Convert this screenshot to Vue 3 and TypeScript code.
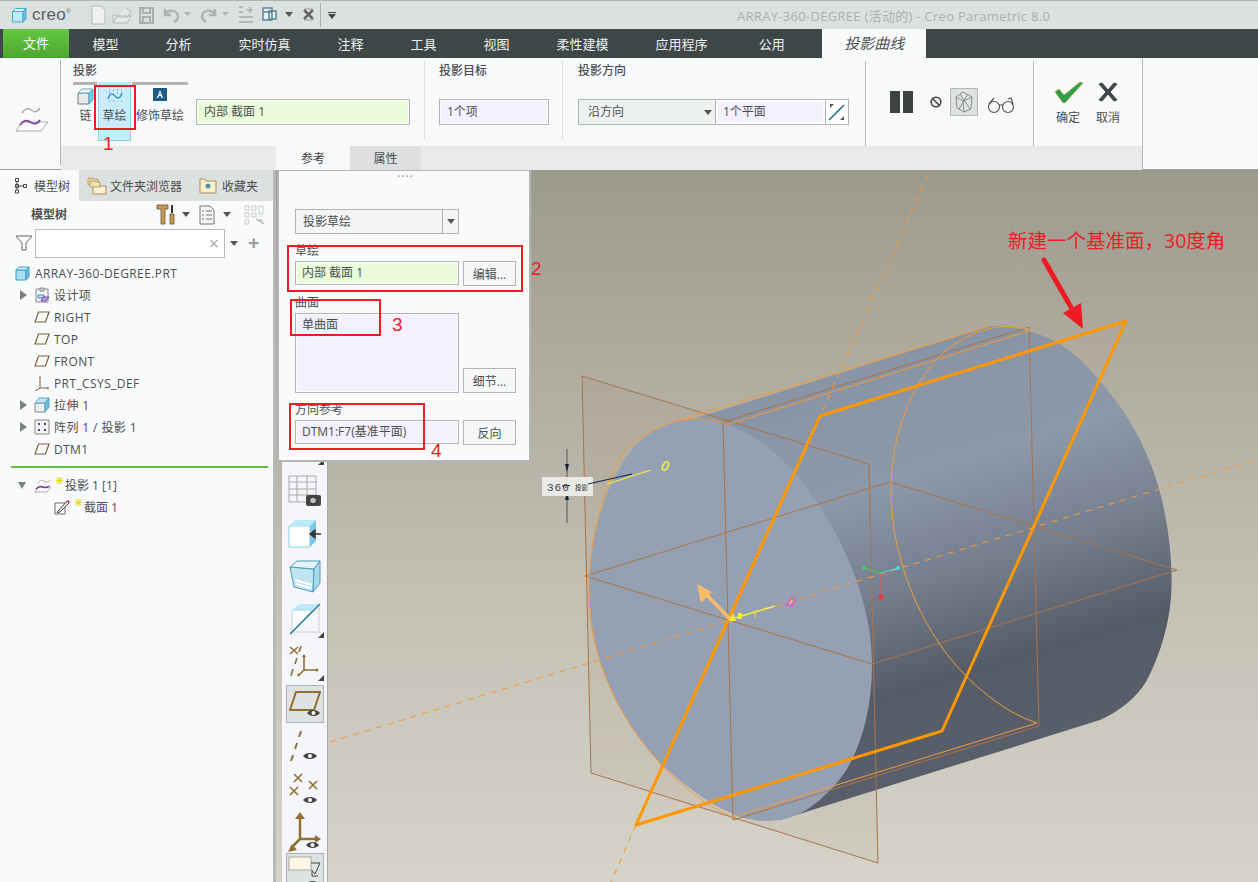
<script setup lang="ts">
// Creo Parametric: 投影曲线 ribbon, model tree, dialog and the 3D view
interface TreeRow {
  label: string
  kind: 'part' | 'design' | 'plane' | 'csys' | 'extrude' | 'pattern'
  arrow?: boolean
}

const menuTabs = [
  { label: '模型', cls: '' },
  { label: '分析', cls: '' },
  { label: '实时仿真', cls: '' },
  { label: '注释', cls: '' },
  { label: '工具', cls: '' },
  { label: '视图', cls: '' },
  { label: '柔性建模', cls: '' },
  { label: '应用程序', cls: '' },
  { label: '公用', cls: 'tab-last' },
]

const treeRows: TreeRow[] = [
  { label: '设计项', kind: 'design', arrow: true },
  { label: 'RIGHT', kind: 'plane' },
  { label: 'TOP', kind: 'plane' },
  { label: 'FRONT', kind: 'plane' },
  { label: 'PRT_CSYS_DEF', kind: 'csys' },
  { label: '拉伸 1', kind: 'extrude', arrow: true },
  { label: '阵列 1 / 投影 1', kind: 'pattern', arrow: true },
  { label: 'DTM1', kind: 'plane' },
]
</script>

<template>
  <div class="app">
    <header class="titlebar">
      <svg class="t-cube" width="16" height="16" viewBox="0 0 16 16">
        <path d="M1.5 4.5h10.5v10.500h-10.500z" fill="#bfe9f8" stroke="#4aa7cb" />
        <path d="M1.500 4.500l3-3h10.500l-3 3z" fill="#e3f6fd" stroke="#4aa7cb" />
        <path d="M12 4.500l3-3v10.500l-3 3z" fill="#6cc0de" stroke="#4aa7cb" />
      </svg>
      <span class="logo">creo<sup>®</sup></span>
      <svg class="quick" width="250" height="22" viewBox="0 0 250 22" fill="none" stroke="#b4b9b9">
        <path d="M1 2h9l4 4v14h-13z" fill="#eff1f1" />
        <path d="M22 19v-8h4l2 2h9l3-6-5-3M22 19h14l4-7h-14l-4 7" fill="#e6e9e9" />
        <path d="M49 4h13v15h-13zM52 4v5h7v-5M52 19v-6h7v6" stroke-width="2" stroke="#a9aeae" />
        <path d="M74 10c4-5 12-4 13 2 0 3-2 5-4 6M74 5v6h6" stroke-width="2.500" stroke="#aeb3b3" />
        <path d="M93 8h7l-3.500 4z" fill="#aeb3b3" stroke="none" />
        <path d="M124 10c-4-5-12-4-13 2 0 3 2 5 4 6M124 5v6h-6" stroke-width="2.500" stroke="#aeb3b3" />
        <path d="M131 8h7l-3.500 4z" fill="#aeb3b3" stroke="none" />
        <path d="M148 3h4M148 8h4M148 13h14M148 18h14M156 6h6M159 3v6" stroke-width="2" />
        <path d="M172 4h9v4h-9zM172 8h9v8h-9zM178 7h7v8h-7z" fill="#e7f2f6" stroke="#5d8494" stroke-width="1.500" />
        <path d="M194 8h8l-4 5z" fill="#555" stroke="none" />
        <path d="M213 6l9 9M222 6l-9 9" stroke="#666" stroke-width="2.500" />
        <path d="M213 5h9M213 16h9" stroke="#999" />
      </svg>
      <i class="t-sep" />
      <svg class="t-drop" width="10" height="10" viewBox="0 0 10 10"><path d="M1 2h8v1h-8zM1 4h8l-4 5z" fill="#444" /></svg>
      <span class="wintitle">ARRAY-360-DEGREE (活动的) - Creo Parametric 8.0</span>
    </header>

    <nav class="menubar">
      <span class="file-tab">文件</span>
      <span v-for="t in menuTabs" :key="t.label" class="menu-tab" :class="t.cls">{{ t.label }}</span>
      <span class="active-tab">投影曲线</span>
    </nav>

    <section class="ribbon">
      <div class="rb-lead">
        <svg width="34" height="30" viewBox="0 0 34 30" fill="none">
          <path d="M7 9c3-5 6-5 9-3s6 3 9-2" stroke="#a9a9a9" stroke-width="1.500" />
          <path d="M1 27l6-9h26l-7 9z" fill="#fff" stroke="#aaa" />
          <path d="M5 21c3-5 7-5 10-3s7 3 10-2" stroke="#7a4aa6" stroke-width="1.800" />
        </svg>
      </div>
      <div class="rb-main">
        <div class="rb-groups">
          <div class="group g-proj">
            <div class="g-title">投影</div>
            <div class="g-bars"><i class="b1" /><i class="b2" /><i class="b3" /></div>
            <div class="g-row">
              <div class="rb-btn b-chain">
                <svg width="17" height="17" viewBox="0 0 17 17">
                  <path d="M1 5h11v11h-11z" fill="#e8e9e9" stroke="#777" />
                  <path d="M1 5l4-4h11l-4 4z" fill="#f8f8f8" stroke="#5aa8c8" />
                  <path d="M12 5l4-4v11l-4 4z" fill="#7fc6df" stroke="#5aa8c8" />
                </svg>
                <span>链</span>
              </div>
              <div class="rb-btn b-sketch">
                <svg width="16" height="14" viewBox="0 0 16 14" fill="none">
                  <path d="M2 1h.8M6 1h.8M10 1h.8M14 1h.8M2 4h.8M10 4h.800M14 4h.8M2 12h.8M6 12h.8M14 12h.8" stroke="#666" />
                  <path d="M1 10c2-6 4-6 7-3s5 3 7-3" stroke="#2d9fc4" stroke-width="1.500" />
                </svg>
                <span>草绘</span>
              </div>
              <div class="rb-btn b-cosm">
                <svg width="14" height="13" viewBox="0 0 14 13"><rect width="14" height="13" fill="#1c5b82" /><path d="M7 2l3 8h-1.500l-.6-2h-2l-.6 2h-1.500zM6.300 6.700h1.400l-.7-2.200z" fill="#fff" /></svg>
                <span>修饰草绘</span>
              </div>
              <div class="field f-green f-sk">内部 截面 1</div>
            </div>
          </div>
          <div class="group g-target">
            <div class="g-title">投影目标</div>
            <div class="field f-violet f-target">1个项</div>
          </div>
          <div class="group g-dir">
            <div class="g-title">投影方向</div>
            <div class="dir-row">
              <div class="dir-sel">沿方向<i class="caret" /></div>
              <div class="dir-val"><span>1个平面</span></div>
              <div class="dir-flip">
                <svg width="18" height="18" viewBox="0 0 18 18" fill="none">
                  <path d="M1 17l15-15" stroke="#1d6e96" stroke-width="1.600" />
                  <path d="M2 1h4l-4 4zM16 17h-4l4-4z" fill="#555" />
                </svg>
              </div>
            </div>
          </div>
          <div class="group g-ctrl">
            <div class="pause"><i /><i /></div>
            <svg class="stop" width="12" height="12" viewBox="0 0 12 12" fill="none" stroke="#444" stroke-width="1.600"><circle cx="6" cy="6" r="4.800" /><path d="M2.500 2.500l7 7" /></svg>
            <div class="preview">
              <svg width="20" height="22" viewBox="0 0 20 22" fill="none" stroke="#777" stroke-width=".8"><path d="M2 6l7-5 9 5-1 12-7 3-7-4zM2 6l7 4 9-4M9 10l1 11M6 3l10 15M14 3l-9 15" /></svg>
            </div>
            <svg class="glasses" width="28" height="18" viewBox="0 0 28 18" fill="none" stroke="#555" stroke-width="1.200"><circle cx="7" cy="11" r="5.500" /><circle cx="21" cy="11" r="5.500" /><path d="M12 9h4M2 8l5-6M26 8l-2-6-3 1" /></svg>
          </div>
          <div class="group g-ok">
            <div class="ok-btn">
              <svg width="29" height="22" viewBox="0 0 29 22"><path d="M1 11l4-3 5 6L26 1l3 1-18 20h-2z" fill="#2f9e4f" stroke="#b9b23b" stroke-width=".8" /></svg>
              <span>确定</span>
            </div>
            <div class="ok-btn">
              <svg width="20" height="22" viewBox="0 0 20 22"><path d="M1 3l3-1 6 7 6-7 3 1-7 8 7 8-3 1-6-7-6 7-3-1 7-8z" fill="#3f4446" stroke="#3f4446" /></svg>
              <span>取消</span>
            </div>
          </div>
        </div>
        <div class="rb-tabs">
          <span class="sub-tab on">参考</span>
          <span class="sub-tab">属性</span>
        </div>
      </div>
      <div class="rb-rest" />
    </section>

    <main class="work">
      <aside class="side">
        <div class="side-tabs">
          <div class="s-tab on">
            <svg width="14" height="17" viewBox="0 0 14 17" fill="none" stroke="#444"><path d="M1.500 1.500h3v3h-3zM1.500 7.500h3v3h-3zM1.500 13h3v3h-3zM9.500 7.500h3v3h-3zM3 4.500v8.500M4.500 9h5" /></svg>
            模型树
          </div>
          <div class="s-tab t2">
            <svg width="20" height="19" viewBox="0 0 20 19"><path d="M1 2h5l1 1h4v6h-10z" fill="#e8d8a8" stroke="#b5a06c" /><path d="M6 9h5l1 1h7v8h-13z" fill="#fbf1d4" stroke="#a38f5f" /><path d="M3 5h5l1 1h4v5h-10z" fill="#f0e2b8" stroke="#b5a06c" /></svg>
            文件夹浏览器
          </div>
          <div class="s-tab t3">
            <svg width="18" height="16" viewBox="0 0 18 16"><path d="M1 3V1h5l1 2h10v12h-16z" fill="#fbeecb" stroke="#a3905f" /><path d="M9 5.500v5M6.500 8h5M7 6l4 4M11 6l-4 4" stroke="#1d6e96" /></svg>
            收藏夹
          </div>
        </div>
        <div class="side-body">
          <div class="tree-head">
            <b>模型树</b>
            <svg class="h-tools" width="20" height="21" viewBox="0 0 20 21">
              <path d="M1 1h11v4h-3v15h-4v-15h-4z" fill="#c69a55" stroke="#6b5330" stroke-width=".8" />
              <path d="M15 1h2v8h-2z" fill="#333" /><path d="M14 10h4v10h-4z" fill="#c69a55" stroke="#6b5330" stroke-width=".8" />
            </svg>
            <i class="caret c1" />
            <svg class="h-list" width="16" height="20" viewBox="0 0 16 20" fill="none" stroke="#777"><path d="M1 1h10l4 4v14h-14z" fill="#f1f3f4" /><path d="M3 6h2M7 6h6M3 10h2M7 10h6M3 14h2M7 14h6" /></svg>
            <i class="caret c2" />
            <svg class="h-hide" width="21" height="20" viewBox="0 0 21 20" fill="none" stroke="#c8cbcb"><path d="M1 1h4v4h-4zM8 1h4v4h-4zM15 1h4v8h-4zM1 8h4v4h-4zM8 8h4v4h-4zM1 15h4v4h-4z" /><path d="M12 14l8 5M14 16c2-2 4-1 5 1" stroke="#9a9d9d" /></svg>
          </div>
          <div class="search">
            <svg width="18" height="16" viewBox="0 0 18 16" fill="none" stroke="#666"><path d="M1 1h16l-6 7v7h-4v-7z" fill="#fff" /></svg>
            <div class="search-box"><span>×</span></div>
            <i class="caret c3" />
            <span class="plus">+</span>
          </div>
          <div class="root-row">
            <svg width="15" height="15" viewBox="0 0 15 15"><path d="M1 4h10v10h-10z" fill="#a9def3" stroke="#3f9fc5" /><path d="M1 4l3-3h10l-3 3z" fill="#d2effa" stroke="#3f9fc5" /><path d="M11 4l3-3v10l-3 3z" fill="#69bede" stroke="#3f9fc5" /></svg>
            ARRAY-360-DEGREE.PRT
          </div>
          <div v-for="r in treeRows" :key="r.label" class="tree-row">
            <i class="arrow" :class="{ off: !r.arrow }" />
            <svg class="ticon" width="16" height="16" viewBox="0 0 16 16" fill="none">
              <template v-if="r.kind === 'plane'"><path d="M1 13L4.500 3H15L11.500 13z" stroke="#7a6232" stroke-width="1.200" /></template>
              <template v-else-if="r.kind === 'csys'"><path d="M6 2v11H15M6 13L1 16" stroke="#7a6232" /><path d="M6 1l-1 2h2zM15 13l-2-1v2z" fill="#7a6232" /></template>
              <template v-else-if="r.kind === 'design'">
                <path d="M2 2h12v13h-12z" fill="#f2f3f4" stroke="#888" /><path d="M6 1h4v3h-4z" fill="#ddd" stroke="#888" />
                <path d="M4 8h6v3h-6z" fill="#bcdcec" stroke="#4d8eae" /><path d="M7 14l2-4h6l-3 4z" fill="#b59cdc" stroke="#7a4aa6" />
              </template>
              <template v-else-if="r.kind === 'extrude'">
                <path d="M1 6h10v9h-10z" fill="#eceded" stroke="#888" /><path d="M1 6l4-5h10l-4 5z" fill="#c4e4f1" stroke="#5aa8c8" /><path d="M11 6l4-5v9l-4 5z" fill="#6fbcd9" stroke="#5aa8c8" />
              </template>
              <template v-else>
                <path d="M1 1h14v14h-14z" fill="#f4f5f6" stroke="#888" />
                <path d="M4 4h2v2h-2zM10 4h2v2h-2zM4 10h2v2h-2zM10 10h2v2h-2z" fill="#4a4490" />
              </template>
            </svg>
            <span>{{ r.label }}</span>
          </div>
          <div class="green-line" />
          <div class="new-row">
            <i class="arrow down" />
            <svg width="17" height="15" viewBox="0 0 17 15" fill="none"><path d="M4 5c2-3 4-3 6-2s4 2 6-1" stroke="#aaa" /><path d="M1 14l3-5h13l-4 5z" stroke="#aaa" fill="#fff" /><path d="M2 11c3-3 5-3 7-2s4 1 6-1" stroke="#7a2ea6" stroke-width="1.400" /></svg>
            <em>⋇</em><span>投影 1 [1]</span>
          </div>
          <div class="new-row sub">
            <svg width="16" height="16" viewBox="0 0 16 16" fill="none"><path d="M1 4h10v11h-10z" fill="#fff" stroke="#666" /><path d="M4 12l9-10 2 2-9 9-3 1z" fill="#ddd" stroke="#555" /><path d="M13 2l1-1 2 2-1 1z" fill="#c33" /></svg>
            <em>⋇</em><span>截面 1</span>
          </div>
        </div>
      </aside>

      <div class="view">
        <svg class="scene" viewBox="276 170 982 712" width="982" height="712">
          <defs>
            <linearGradient id="bodyGrad" gradientUnits="userSpaceOnUse" x1="930" y1="340" x2="1050" y2="740">
              <stop offset="0" stop-color="#8994a5" />
              <stop offset=".3" stop-color="#8d98a9" />
              <stop offset=".55" stop-color="#747e8d" />
              <stop offset=".78" stop-color="#565c67" />
              <stop offset="1" stop-color="#595f6a" />
            </linearGradient>
          </defs>
          <!-- translucent plane fills sit behind the part -->
          <path d="M582 376L869 464L878 863L591 773Z" fill="rgba(150,120,100,.09)" />
          <path d="M1126 321L820 416L636 825L942 731Z" fill="rgba(190,170,150,.08)" />

          <!-- cylinder -->
          <path d="M693 419L990 326C1020 326 1040 334 1053 340C1080 355 1098 378 1113 397C1140 432 1155 470 1162 500C1170 535 1173 570 1171 597C1169 625 1160 655 1147 680C1137 698 1118 712 1100 720L780 820Z" fill="url(#bodyGrad)" />
          <path d="M693 419C740 418 790 455 825 515C855 565 872 615 872 665C872 720 855 770 825 795C805 815 785 821 765 821C735 821 700 800 660 763C620 720 589 660 589 590C589 530 610 470 640 441C655 427 675 419 693 419Z" fill="#95a1b2" />

          <!-- planes -->
          <g fill="none" stroke="#a9734d" stroke-width="1">
            <path d="M582 376L869 464L878 863L591 773Z" />
            <path d="M723 422L1029 327L1039 726L733 820Z" />
            <path d="M585 576L890 482L1177 570L872 664Z" />
          </g>

          <!-- silhouette edges -->
          <g fill="none" stroke="#f39a3c" stroke-width="1">
            <path d="M680 420L990 326" />
            <path d="M726 425L1029 331" />
            <path d="M733 817L1037 723" />
            <path d="M726 423C715 420 705 418 693 419C675 419 655 427 627 447C610 470 589 530 589 590C589 660 620 720 660 763C685 790 710 808 733 817" />
            <path d="M1029 329C1000 322 975 330 950 347C915 375 891 430 891 490C891 570 930 640 965 675C990 700 1015 716 1037 723" />
          </g>

          <!-- dashed axes -->
          <g stroke="#f39a3c" stroke-width="1.100" stroke-dasharray="6 6" fill="none">
            <path d="M330 742L730 620" />
            <path d="M730 620L1258 459" />
            <path d="M928 175L820 416" />
            <path d="M636 825L611 882" />
          </g>

          <!-- DTM1 -->
          <path d="M1126 321L820 416L636 825L942 731Z" fill="none" stroke="#ff9800" stroke-width="3" stroke-linejoin="round" />

          <!-- dimension 360 -->
          <path d="M567 449V523" stroke="#555" />
          <path d="M567 472l-2-8h4zM567 492l-2 8h4z" fill="#12204a" />
          <rect x="542" y="477" width="51" height="19" fill="#e9e9e5" />
          <text x="547" y="491" class="dim">360</text>
          <text x="575" y="490" class="dim-s">投影</text>
          <path d="M562 486l8-.5M588 484L632 474" stroke="#12204a" fill="none" />
          <path d="M607 484L651 470" stroke="#f5ee3a" stroke-width="1.300" />
          <ellipse cx="665.500" cy="466" rx="2.500" ry="4.500" transform="rotate(30 665.500 466)" fill="none" stroke="#f5ee3a" stroke-width="1.600" />

          <!-- handles -->
          <path d="M732 621L704 592" stroke="#f8bd6c" stroke-width="3.500" />
          <path d="M697 584L712 592L701 603Z" fill="#f8bd6c" />
          <path d="M735 618L775 606" stroke="#f5ee3a" stroke-width="1.500" />
          <path d="M733 613l-4 8h7zM738 613h4v6h-4z" fill="#f5ee3a" />
          <path d="M755 610v8" stroke="#e0da3a" />
          <path d="M786 605l6-7 3 0-2 8z" fill="none" stroke="#e85ac0" stroke-width="1.400" />
          <path d="M790 604l2-4" stroke="#f5ee3a" />

          <!-- csys -->
          <path d="M881 573L864 568" stroke="#3fcf5a" />
          <path d="M881 573L898 568" stroke="#3fdfe6" />
          <path d="M881 573V597" stroke="#e05a5a" />
          <circle cx="864" cy="568" r="2" fill="#3fcf5a" />
          <circle cx="898" cy="568" r="2" fill="#3fdfe6" />
          <circle cx="881" cy="597" r="2.500" fill="#f0303a" />

          <!-- note arrow -->
          <path d="M1044 260L1076 316" stroke="#ed1c24" stroke-width="5" stroke-linecap="round" />
          <path d="M1083 329L1063 313L1081 303Z" fill="#ed1c24" />
        </svg>

        <div class="note">新建一个基准面，30度角</div>

        <div class="vtools">
          <div class="vt">
            <svg width="34" height="32" viewBox="0 0 34 32" fill="none">
              <path d="M1 1h27v26h-27zM1 7h27M1 14h27M1 20h27M9 1v26M19 1v26" stroke="#a8a8a8" />
              <rect x="18" y="20" width="15" height="11" rx="2" fill="#444" /><circle cx="25" cy="25.500" r="3.500" fill="#bbb" stroke="#222" />
            </svg>
          </div>
          <div class="vt">
            <svg width="34" height="30" viewBox="0 0 34 30" fill="none">
              <path d="M1 7h21v21h-21z" fill="#fff" stroke="#8fd0e8" /><path d="M1 7l6-6h21l-6 6z" fill="#bdeafa" /><path d="M22 7l6-6v21l-6 6z" fill="#7cc9e3" />
              <path d="M33 15h-9M22 15l5-4v8z" stroke="#333" fill="#333" stroke-width="1.300" />
            </svg>
          </div>
          <div class="vt">
            <svg width="32" height="33" viewBox="0 0 32 33" fill="none">
              <path d="M1 7l24 2-1 23-19-5z" fill="#bfe5f2" stroke="#4d9dbb" /><path d="M1 7L8 1h23l-6 8z" fill="#e3f3f8" stroke="#4d9dbb" /><path d="M25 9l6-8v22l-7 9z" fill="#a8d9ea" stroke="#4d9dbb" />
              <path d="M6 20l17 5M7 24l15 4" stroke="#fff" stroke-width="2" />
            </svg>
          </div>
          <div class="vt corner">
            <svg width="32" height="32" viewBox="0 0 32 32" fill="none">
              <path d="M3 7L10 1h20l-7 7z" fill="#bfe9f8" /><path d="M3 7h20L3 30z" fill="#fff" stroke="#a7dbee" /><path d="M30 3v26H3" stroke="#aaa" stroke-dasharray="1 1" /><path d="M1 31L31 1" stroke="#1d6e96" stroke-width="1.300" />
            </svg>
          </div>
          <div class="vt corner">
            <svg width="32" height="32" viewBox="0 0 32 32" fill="none" stroke="#8f6f36" stroke-width="1.600">
              <path d="M1 2l8 7M9 2l-8 7M12 1l-2 6M8 13l-2 6M4 24l-2 7" /><path d="M15 25V10M15 25h14M15 25l-6 6" /><path d="M15 9l-2 3h4zM30 25l-3-2v4zM8 31l3-1-2-2z" fill="#8f6f36" stroke="none" />
            </svg>
          </div>
          <div class="vt">
            <div class="sel">
              <svg width="32" height="28" viewBox="0 0 32 28" fill="none">
                <path d="M1 20L7 2h24l-6 18z" stroke="#8f6f36" stroke-width="2" />
                <path d="M18 23c3-4 10-4 13 0-3 4-10 4-13 0z" fill="#444" /><circle cx="24.500" cy="23" r="2" fill="#fff" />
              </svg>
            </div>
          </div>
          <div class="vt">
            <svg width="32" height="32" viewBox="0 0 32 32" fill="none">
              <path d="M12 1l-2 6M8 13l-2 6M4 25l-2 6" stroke="#8f6f36" stroke-width="2" />
              <path d="M14 26c3-4 11-4 14 0-3 4-11 4-14 0z" fill="#444" /><circle cx="21" cy="26" r="2" fill="#fff" />
            </svg>
          </div>
          <div class="vt">
            <svg width="32" height="32" viewBox="0 0 32 32" fill="none" stroke="#8f6f36" stroke-width="1.600">
              <path d="M5 1l8 8M13 1l-8 8M20 8l8 8M28 8l-8 8M1 14l8 8M9 14l-8 8" />
              <path d="M14 27c3-4 11-4 14 0-3 4-11 4-14 0z" fill="#444" stroke="none" /><circle cx="21" cy="27" r="2" fill="#fff" stroke="none" />
            </svg>
          </div>
          <div class="vt up">
            <svg width="34" height="40" viewBox="0 0 34 40" fill="none">
              <path d="M12 27V6M12 27h17M12 27l-9 9" stroke="#8f6f36" stroke-width="2.500" />
              <path d="M12 0l-5 7h10zM33 27l-6-4v8zM0 40l9-2-5-6z" fill="#8f6f36" />
              <path d="M18 33c3-4 10-4 13 0-3 4-10 4-13 0z" fill="#444" /><circle cx="24.500" cy="33" r="2" fill="#fff" />
            </svg>
          </div>
          <div class="vt top">
            <div class="sel last">
              <svg width="34" height="28" viewBox="0 0 34 28" fill="none">
                <rect x="1" y="1" width="22" height="13" fill="#fff6e3" stroke="#aaa" />
                <path d="M23 7h9l-5 11M27 18l-3-3M24 14v6h6" stroke="#444" />
                <path d="M18 28c3-4 10-4 13 0z" fill="#444" />
              </svg>
            </div>
          </div>
        </div>

        <div class="dialog">
          <div class="grip">····</div>
          <div class="dlg-select"><span>投影草绘</span><b><i class="caret" /></b></div>
          <label>草绘</label>
          <div class="dlg-row">
            <div class="field f-green d-field">内部 截面 1</div>
            <button class="dlg-btn">编辑...</button>
          </div>
          <label>曲面</label>
          <div class="dlg-row">
            <div class="field f-violet d-area">单曲面</div>
            <button class="dlg-btn end">细节...</button>
          </div>
          <label>方向参考</label>
          <div class="dlg-row">
            <div class="field f-violet d-field">DTM1:F7(基准平面)</div>
            <button class="dlg-btn">反向</button>
          </div>
        </div>

        <i class="mark m2" /><i class="mark m3" /><i class="mark m4" />
        <span class="num n2">2</span>
        <span class="num n3">3</span>
        <span class="num n4">4</span>
      </div>
    </main>

    <i class="mark m1" />
    <span class="num n1">1</span>
  </div>
</template>

<style>
html,
body {
  margin: 0;
  background: #fff;
}
</style>

<style scoped>
.app {
  position: relative;
  width: 1258px;
  height: 882px;
  overflow: hidden;
  font-family: "Open Sans", "Noto Sans CJK SC", sans-serif;
  font-size: 12px;
  color: #4b4f4f;
}
svg {
  display: block;
  flex: none;
}

/* title bar */
.titlebar {
  height: 29px;
  box-sizing: border-box;
  border-top: 1px solid #aeb3b1;
  background: #dbe1df;
  display: flex;
  align-items: center;
  padding-left: 11px;
}
.logo {
  margin-left: 5px;
  width: 60px;
  font-family: "Liberation Sans", sans-serif;
  font-size: 17px;
  color: #596062;
  letter-spacing: .2px;
}
.logo sup {
  font-size: 6px;
  vertical-align: 7px;
  line-height: 0;
}
.quick {
  margin-left: -1px;
}
.t-sep {
  width: 1px;
  height: 24px;
  margin-left: -21px;
  background: #a9aeae;
}
.t-drop {
  margin-left: 6px;
}
.wintitle {
  margin-left: 400px;
  font-size: 13px;
  letter-spacing: .3px;
  color: #aab0af;
  white-space: nowrap;
}

/* menu bar */
.menubar {
  height: 29px;
  background: #3e4748;
  display: flex;
  align-items: center;
  padding-left: 3px;
  font-size: 13px;
  color: #eef0f0;
  border-left: 0;
}
.file-tab {
  width: 66px;
  height: 29px;
  line-height: 29px;
  text-align: center;
  color: #fff;
  background: linear-gradient(#63c840, #4ea62f);
}
.menu-tab {
  padding: 0 23.500px;
}
.tab-last {
  margin-left: 4px;
}
.active-tab {
  width: 104px;
  height: 29px;
  margin-left: 14px;
  line-height: 29px;
  text-align: center;
  font-size: 15px;
  font-style: italic;
  background: #f8f9fb;
  color: #505454;
}

/* ribbon */
.ribbon {
  height: 112px;
  display: flex;
  background: #f8f9fb;
  box-sizing: border-box;
  border-bottom: 1px solid #9ba09f;
}
.rb-lead {
  width: 61px;
  flex: none;
  padding: 44px 0 0 15px;
  box-sizing: border-box;
  border-right: 1px solid #b5b8b8;
  margin: 2px 0 4px;
}
.rb-main {
  width: 1082px;
  display: flex;
  flex-direction: column;
  box-sizing: border-box;
  border-right: 1px solid #b5b8b8;
}
.rb-rest {
  flex: 1;
}
.rb-groups {
  height: 88px;
  display: flex;
}
.group {
  position: relative;
  box-sizing: border-box;
  padding-top: 5px;
}
.g-title {
  font-weight: 500;
  line-height: 15px;
}
.g-proj {
  width: 364px;
  padding-left: 12px;
  border-right: 1px solid #dfe1e2;
  margin-top: 3px;
  margin-bottom: 6px;
  padding-top: 2px;
}
.g-bars {
  display: flex;
  gap: 1px;
  height: 3px;
  margin-top: 4px;
}
.g-bars i {
  background: #b3b3b3;
}
.b1 { width: 24px; }
.b2 { width: 33px; background: #bfe8fa !important; }
.b3 { width: 56px; }
.g-row {
  display: flex;
  align-items: flex-start;
}
.rb-btn {
  display: flex;
  flex-direction: column;
  align-items: center;
  box-sizing: border-box;
  height: 48px;
  padding-top: 3px;
  line-height: 16px;
}
.rb-btn span {
  margin-top: 3px;
  white-space: nowrap;
}
.b-chain {
  width: 25px;
}
.b-sketch {
  width: 33px;
  height: 56px;
  margin-bottom: -8px;
  background: #c9ecfb;
  border: 1px solid #8cd2ee;
  border-top: 0;
  padding-top: 4px;
}
.b-sketch span {
  margin-top: 5px;
}
.b-cosm {
  width: 56px;
  margin-left: 1px;
}
.b-cosm span {
  margin-top: 7px;
}
.field {
  box-sizing: border-box;
  border: 1px solid #b1b4b4;
  box-shadow: inset 0 0 0 1px #fff;
  padding-left: 7px;
  white-space: nowrap;
}
.f-green {
  background: #eafbdc;
}
.f-violet {
  background: #f4f0fd;
}
.f-sk {
  width: 214px;
  height: 26px;
  line-height: 24px;
  margin: 14px 0 0 8px;
}
.g-target {
  width: 138px;
  padding-left: 14px;
  border-right: 1px solid #dfe1e2;
  margin: 3px 0 6px;
  padding-top: 2px;
}
.f-target {
  width: 110px;
  height: 26px;
  line-height: 24px;
  margin-top: 21px;
}
.g-dir {
  width: 303px;
  padding-left: 15px;
  border-right: 1px solid #b5b8b8;
  margin: 3px 0 0;
  padding-top: 2px;
}
.dir-row {
  display: flex;
  width: 271px;
  height: 26px;
  margin-top: 21px;
  box-sizing: border-box;
  border: 1px solid #b1b4b4;
  line-height: 24px;
}
.dir-sel {
  width: 137px;
  padding-left: 9px;
  box-sizing: border-box;
  background: #eef1f1;
  position: relative;
  border-right: 1px solid #b1b4b4;
}
.dir-sel .caret {
  position: absolute;
  right: 3px;
  top: 10px;
}
.dir-val {
  width: 110px;
  background: #fff;
  padding: 2px 2px 2px 2px;
  box-sizing: border-box;
  line-height: 20px;
  border-right: 1px solid #b1b4b4;
}
.dir-val span {
  display: block;
  height: 100%;
  padding-left: 5px;
  background: #f4f0fd;
}
.dir-flip {
  flex: 1;
  display: flex;
  align-items: center;
  justify-content: center;
  background: #fff;
}
.caret {
  display: block;
  width: 0;
  height: 0;
  border: 4px solid transparent;
  border-top: 5px solid #555;
  border-bottom: 0;
}
.g-ctrl {
  width: 168px;
  display: flex;
  align-items: center;
  border-right: 1px solid #b5b8b8;
  padding: 0 0 0 24px;
  margin-top: 3px;
  height: 85px;
}
.g-ctrl > * {
  margin-top: -4px;
}
.pause {
  display: flex;
  gap: 3px;
}
.pause i {
  width: 10px;
  height: 22px;
  background: #3c4142;
}
.g-ctrl > .stop {
  margin-left: 17px;
  margin-top: -3px;
}
.preview {
  width: 28px;
  height: 28px;
  margin-left: 8px;
  display: flex;
  align-items: center;
  justify-content: center;
  box-sizing: border-box;
  border: 1px solid #b5b8b8;
  background: #dfe2e3;
}
.g-ctrl > .glasses {
  margin-left: 9px;
  margin-top: 3px;
}
.g-ok {
  display: flex;
  padding: 23px 0 0 20px;
  margin-top: 0;
}
.ok-btn {
  display: flex;
  flex-direction: column;
  align-items: center;
  width: 28px;
  margin-right: 12px;
}
.ok-btn span {
  margin-top: 8px;
  line-height: 14px;
}
.rb-tabs {
  flex: 1;
  display: flex;
  padding-left: 215px;
  background: #e9eaec;
}
.sub-tab {
  width: 71px;
  text-align: center;
  line-height: 25px;
  background: #dedfe0;
}
.sub-tab.on {
  width: 74px;
  background: #f8f9fb;
  color: #3b3f3f;
}

/* work area */
.work {
  display: flex;
  height: 712px;
}
.side {
  width: 273px;
  flex: none;
  background: #f8fafb;
  border-right: 3px solid #b5b9b8;
}
.side-tabs {
  height: 31px;
  display: flex;
  background: #dde0e0;
}
.s-tab {
  position: relative;
  display: flex;
  align-items: center;
  gap: 6px;
  white-space: nowrap;
}
.s-tab.on {
  width: 79px;
  padding-left: 14px;
  box-sizing: border-box;
  background: #f8fafb;
}
.t2 {
  margin-left: 8px;
  gap: 3px;
  width: 112px;
}
.t3 {
  gap: 5px;
}
.tree-head {
  position: relative;
  height: 27px;
  padding: 5px 0 0 31px;
  box-sizing: border-box;
  line-height: 18px;
}
.tree-head b {
  font-weight: 600;
}
.h-tools,
.h-list,
.h-hide,
.c1,
.c2 {
  position: absolute;
}
.h-tools { left: 156px; top: 3px; }
.c1 { left: 182px; top: 11px; }
.h-list { left: 199px; top: 4px; }
.c2 { left: 223px; top: 11px; }
.h-hide { left: 244px; top: 4px; }
.search {
  display: flex;
  align-items: center;
  height: 30px;
  padding-left: 15px;
}
.search-box {
  width: 190px;
  height: 29px;
  margin-left: 2px;
  box-sizing: border-box;
  border: 1px solid #b7bcbc;
  background: #fff;
  text-align: right;
  padding-right: 5px;
  font-size: 18px;
  line-height: 27px;
  color: #aaa;
}
.c3 {
  margin-left: 5px;
}
.plus {
  margin-left: 10px;
  font-size: 20px;
  font-weight: 700;
  color: #9a9d9d;
  line-height: 20px;
}
.root-row {
  display: flex;
  align-items: center;
  gap: 5px;
  height: 22px;
  margin-top: 4px;
  padding-left: 15px;
  letter-spacing: .4px;
}
.tree-row {
  display: flex;
  align-items: center;
  height: 22px;
  padding-left: 20px;
  letter-spacing: .4px;
}
.arrow {
  display: block;
  width: 0;
  height: 0;
  border: 5px solid transparent;
  border-left: 7px solid #7d8080;
  border-right: 0;
}
.arrow.off {
  visibility: hidden;
}
.arrow.down {
  border: 4.500px solid transparent;
  border-top: 7px solid #7d8080;
  border-bottom: 0;
  margin-right: 8px;
}
.ticon {
  margin: 0 4px 0 7px;
}
.green-line {
  height: 2px;
  margin: 6px 5px 6px 11px;
  background: #62bf3c;
}
.new-row {
  display: flex;
  align-items: center;
  height: 22px;
  padding-left: 18px;
}
.new-row.sub {
  padding-left: 54px;
}
.new-row em {
  font-style: normal;
  font-size: 11px;
  line-height: 8px;
  color: #e6d800;
  margin: -8px 0 0 4px;
  width: 10px;
  font-family: "DejaVu Sans", sans-serif;
}
.new-row span {
  margin-left: 0;
}

/* 3D view */
.view {
  position: relative;
  flex: 1;
  background: linear-gradient(#9c9a8d 0, #aeab9e 25%, #c3c0b4 60%, #d6d4c9 100%);
}
.scene {
  position: absolute;
  left: 0;
  top: 0;
}
.dim {
  font-family: "Liberation Mono", monospace;
  font-size: 11px;
  letter-spacing: 1px;
  fill: #444;
}
.dim-s {
  font-size: 6.500px;
  fill: #222;
}
.note {
  position: absolute;
  left: 732px;
  top: 58px;
  font-size: 19.500px;
  line-height: 26px;
  color: #ed1c24;
  white-space: nowrap;
}
.vtools {
  position: absolute;
  left: 6px;
  top: 0;
  bottom: 0;
  width: 46px;
  box-sizing: border-box;
  padding-top: 300px;
  background: #f4f6f9;
  border-right: 1px solid #a9acab;
}
.vtools::before {
  content: "";
  position: absolute;
  top: 289px;
  right: 3px;
  border: 3px solid transparent;
  border-right-color: #444;
  border-bottom-color: #444;
}
.vt {
  position: relative;
  height: 42.500px;
  display: flex;
  align-items: center;
  justify-content: center;
}
.vt.up {
  align-items: flex-start;
  margin-top: 0;
  padding-top: 2px;
  box-sizing: border-box;
}
.vt.top {
  align-items: flex-start;
}
.corner::after {
  content: "";
  position: absolute;
  right: 3px;
  bottom: 2px;
  border: 3px solid transparent;
  border-right-color: #444;
  border-bottom-color: #444;
}
.sel {
  width: 38px;
  height: 38px;
  display: flex;
  align-items: center;
  justify-content: center;
  box-sizing: border-box;
  border: 1px solid #b0b3b3;
  background: #dfe2e3;
}
.sel.last {
  height: 40px;
  align-items: flex-start;
  padding-top: 2px;
}
.dialog {
  position: absolute;
  left: 1px;
  top: 0;
  width: 254px;
  height: 292px;
  box-sizing: border-box;
  background: #f9fafc;
  border: 2px solid #b3b6b5;
  border-top-width: 1px;
  padding: 0 13px 0 16px;
}
.grip {
  height: 38px;
  text-align: center;
  font-size: 12px;
  line-height: 12px;
  letter-spacing: 1px;
  color: #888;
}
.dlg-select {
  display: flex;
  width: 164px;
  height: 25px;
  box-sizing: border-box;
  border: 1px solid #b1b4b4;
  background: #f4f6f6;
  line-height: 23px;
}
.dlg-select span {
  flex: 1;
  padding-left: 7px;
}
.dlg-select b {
  width: 15px;
  display: flex;
  align-items: center;
  justify-content: center;
  border-left: 1px solid #b1b4b4;
}
.dialog label {
  display: block;
  height: 16px;
  line-height: 16px;
  margin: 9px 0 2px;
}
.dlg-row {
  display: flex;
  align-items: flex-end;
  gap: 4px;
}
.dlg-row .field {
  padding-left: 6px;
}
.d-field {
  width: 164px;
  height: 24px;
  margin-bottom: 1px;
  line-height: 22px;
}
.d-area {
  width: 164px;
  height: 80px;
  line-height: 22px;
}
.dlg-btn {
  width: 53px;
  height: 25px;
  padding: 0;
  font: inherit;
  color: inherit;
  background: #f6f7f8;
  border: 1px solid #b1b4b4;
}
.mark {
  position: absolute;
  box-sizing: border-box;
  border: 2px solid #ed1c24;
}
.m1 { left: 94px; top: 85px; width: 42px; height: 45px; }
.m2 { left: 11px; top: 75px; width: 236px; height: 47px; }
.m3 { left: 14px; top: 129px; width: 91px; height: 37px; }
.m4 { left: 13px; top: 233px; width: 136px; height: 47px; }
.num {
  position: absolute;
  font-family: "Liberation Sans", sans-serif;
  font-size: 19px;
  line-height: 20px;
  color: #ed1c24;
}
.n1 { left: 103px; top: 134px; }
.n2 { left: 255px; top: 89px; }
.n3 { left: 116px; top: 145px; }
.n4 { left: 155px; top: 271px; }
</style>
